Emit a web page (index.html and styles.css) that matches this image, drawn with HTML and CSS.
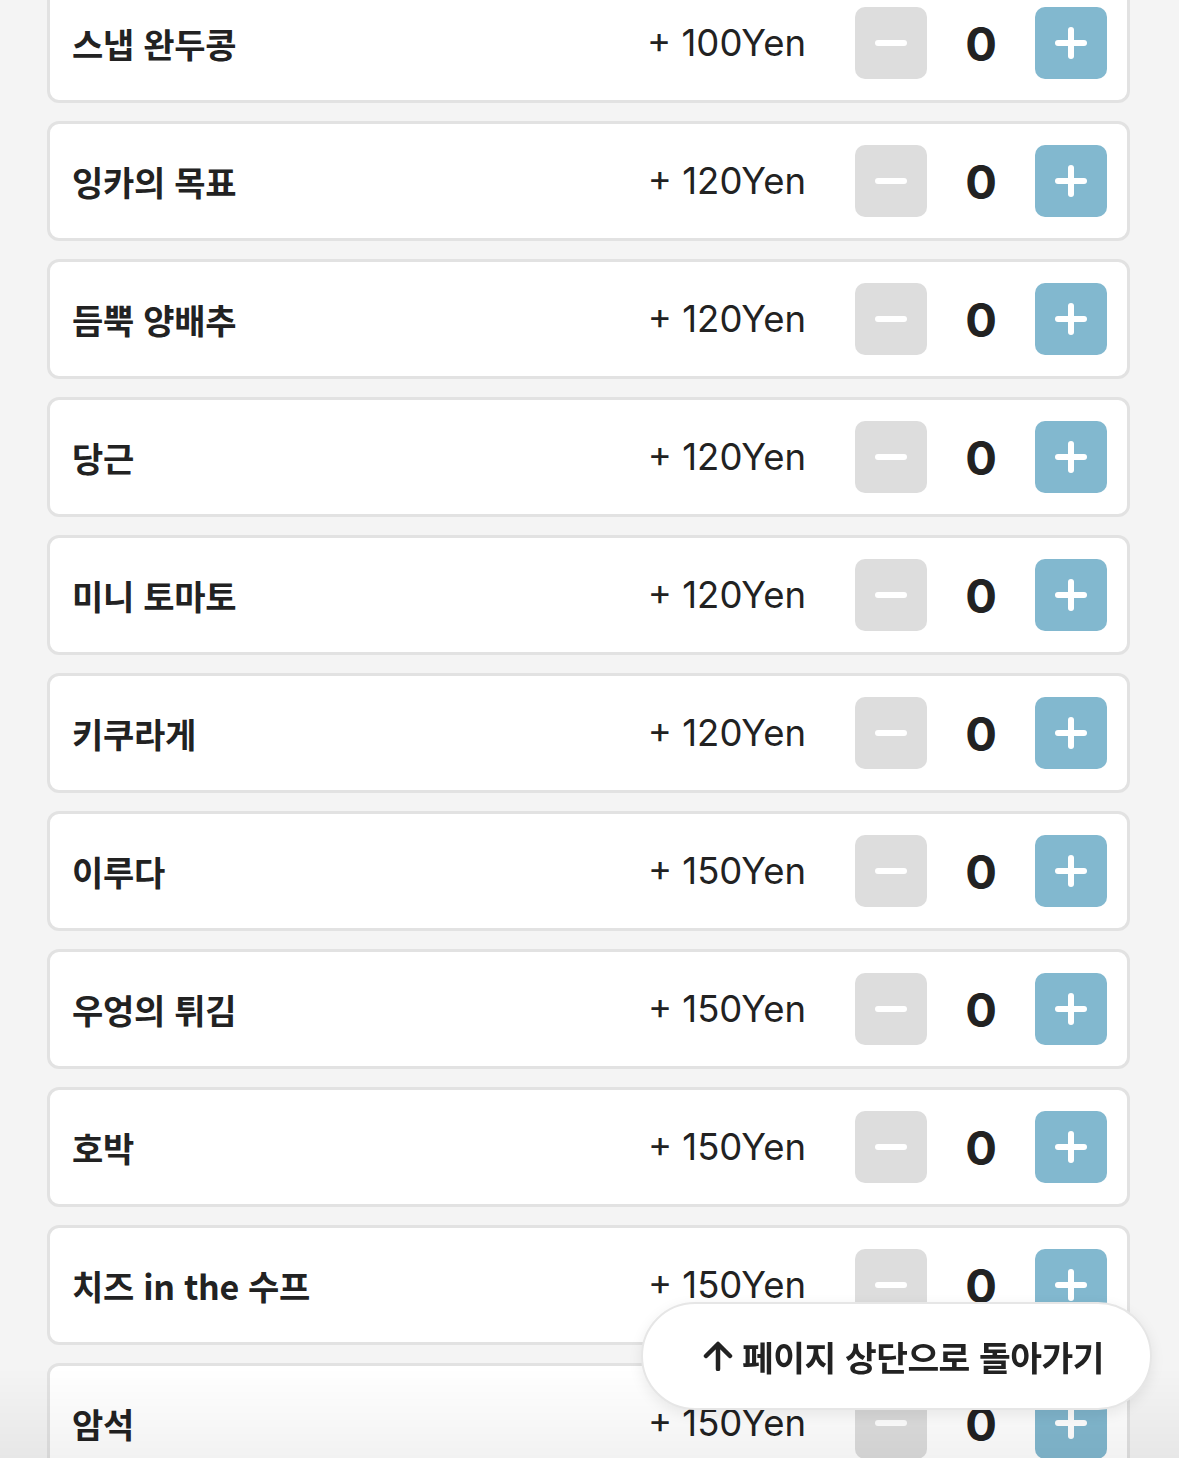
FILE: index.html
```html
<!DOCTYPE html>
<html lang="ko">
<head>
    <meta charset="UTF-8">
    <meta name="viewport" content="width=device-width, initial-scale=1.0">
    <title>토핑 선택</title>
    <link rel="stylesheet" href="styles.css">
</head>
<body>
    <div class="topping-list">
        <div class="topping">
            <span class="name">스냅 완두콩</span>
            <span class="price">+ 100Yen</span>
            <div class="stepper">
                <button class="minus-btn"><span></span></button>
                <span class="count">0</span>
                <button class="plus-btn"><span></span></button>
            </div>
        </div>
        <div class="topping">
            <span class="name">잉카의 목표</span>
            <span class="price">+ 120Yen</span>
            <div class="stepper">
                <button class="minus-btn"><span></span></button>
                <span class="count">0</span>
                <button class="plus-btn"><span></span></button>
            </div>
        </div>
        <div class="topping">
            <span class="name">듬뿍 양배추</span>
            <span class="price">+ 120Yen</span>
            <div class="stepper">
                <button class="minus-btn"><span></span></button>
                <span class="count">0</span>
                <button class="plus-btn"><span></span></button>
            </div>
        </div>
        <div class="topping">
            <span class="name">당근</span>
            <span class="price">+ 120Yen</span>
            <div class="stepper">
                <button class="minus-btn"><span></span></button>
                <span class="count">0</span>
                <button class="plus-btn"><span></span></button>
            </div>
        </div>
        <div class="topping">
            <span class="name">미니 토마토</span>
            <span class="price">+ 120Yen</span>
            <div class="stepper">
                <button class="minus-btn"><span></span></button>
                <span class="count">0</span>
                <button class="plus-btn"><span></span></button>
            </div>
        </div>
        <div class="topping">
            <span class="name">키쿠라게</span>
            <span class="price">+ 120Yen</span>
            <div class="stepper">
                <button class="minus-btn"><span></span></button>
                <span class="count">0</span>
                <button class="plus-btn"><span></span></button>
            </div>
        </div>
        <div class="topping">
            <span class="name">이루다</span>
            <span class="price">+ 150Yen</span>
            <div class="stepper">
                <button class="minus-btn"><span></span></button>
                <span class="count">0</span>
                <button class="plus-btn"><span></span></button>
            </div>
        </div>
        <div class="topping">
            <span class="name">우엉의 튀김</span>
            <span class="price">+ 150Yen</span>
            <div class="stepper">
                <button class="minus-btn"><span></span></button>
                <span class="count">0</span>
                <button class="plus-btn"><span></span></button>
            </div>
        </div>
        <div class="topping">
            <span class="name">호박</span>
            <span class="price">+ 150Yen</span>
            <div class="stepper">
                <button class="minus-btn"><span></span></button>
                <span class="count">0</span>
                <button class="plus-btn"><span></span></button>
            </div>
        </div>
        <div class="topping">
            <span class="name">치즈 in the 수프</span>
            <span class="price">+ 150Yen</span>
            <div class="stepper">
                <button class="minus-btn"><span></span></button>
                <span class="count">0</span>
                <button class="plus-btn"><span></span></button>
            </div>
        </div>
        <div class="topping">
            <span class="name">암석</span>
            <span class="price">+ 150Yen</span>
            <div class="stepper">
                <button class="minus-btn"><span></span></button>
                <span class="count">0</span>
                <button class="plus-btn"><span></span></button>
            </div>
        </div>
    </div>

    <div class="bottom-fade"></div>

    <a href="#" class="back-to-top">
        <svg width="30" height="30" viewBox="0 0 30 30">
            <path d="M15 28 V4 M3 15 L15 3 L27 15" fill="none" stroke="#222" stroke-width="4.5" stroke-linecap="round" stroke-linejoin="round"/>
        </svg>
        페이지 상단으로 돌아가기
    </a>
</body>
</html>
```

FILE: styles.css
```css
body {
    margin: 0;
    background-color: #f4f4f4;
    font-family: "Noto Sans CJK KR", "Liberation Sans", sans-serif;
    color: #222;
    overflow: hidden;
}

.topping-list {
    display: flex;
    flex-direction: column;
    gap: 18px;
    margin-top: -17px;
    padding: 0 49px 0 47px;
}

.topping {
    display: flex;
    align-items: center;
    height: 120px;
    box-sizing: border-box;
    padding: 0 20px 0 22px;
    background-color: white;
    border: 3px solid #e2e2e2;
    border-radius: 12px;
}

.topping .name {
    flex: 1;
    font-size: 34px;
    font-weight: bold;
    letter-spacing: -0.3px;
}

.topping .price {
    font-family: Inter, "Liberation Sans", sans-serif;
    font-size: 36.5px;
    margin-right: 49px;
}

.stepper {
    display: flex;
    align-items: center;
}

.stepper button {
    width: 72px;
    height: 72px;
    border: none;
    border-radius: 10px;
    padding: 0;
    position: relative;
}

.minus-btn {
    background-color: #dddddd;
}

.plus-btn {
    background-color: #82b8cf;
}

.stepper button span {
    position: absolute;
    left: 20px;
    top: 33px;
    width: 32px;
    height: 6px;
    border-radius: 3px;
    background-color: white;
}

.plus-btn span::after {
    content: "";
    position: absolute;
    left: 13px;
    top: -13px;
    width: 6px;
    height: 32px;
    border-radius: 3px;
    background-color: white;
}

.count {
    width: 108px;
    text-align: center;
    font-family: Inter, "Liberation Sans", sans-serif;
    font-size: 47px;
    font-weight: bold;
    color: #222;
}

.bottom-fade {
    position: fixed;
    left: 0;
    right: 0;
    bottom: 0;
    height: 90px;
    background: linear-gradient(to bottom, rgba(244, 244, 244, 0), rgba(0, 0, 0, 0.05));
    pointer-events: none;
}

.back-to-top {
    position: fixed;
    right: 27px;
    bottom: 48px;
    width: 511px;
    height: 108px;
    box-sizing: border-box;
    padding-left: 14px;
    display: flex;
    align-items: center;
    justify-content: center;
    gap: 9px;
    background-color: white;
    border: 2px solid #e6e6e6;
    border-radius: 54px;
    box-shadow: 0 4px 14px rgba(0, 0, 0, 0.08);
    color: #222;
    text-decoration: none;
    font-size: 34.5px;
    font-weight: bold;
    letter-spacing: -0.5px;
}
```
